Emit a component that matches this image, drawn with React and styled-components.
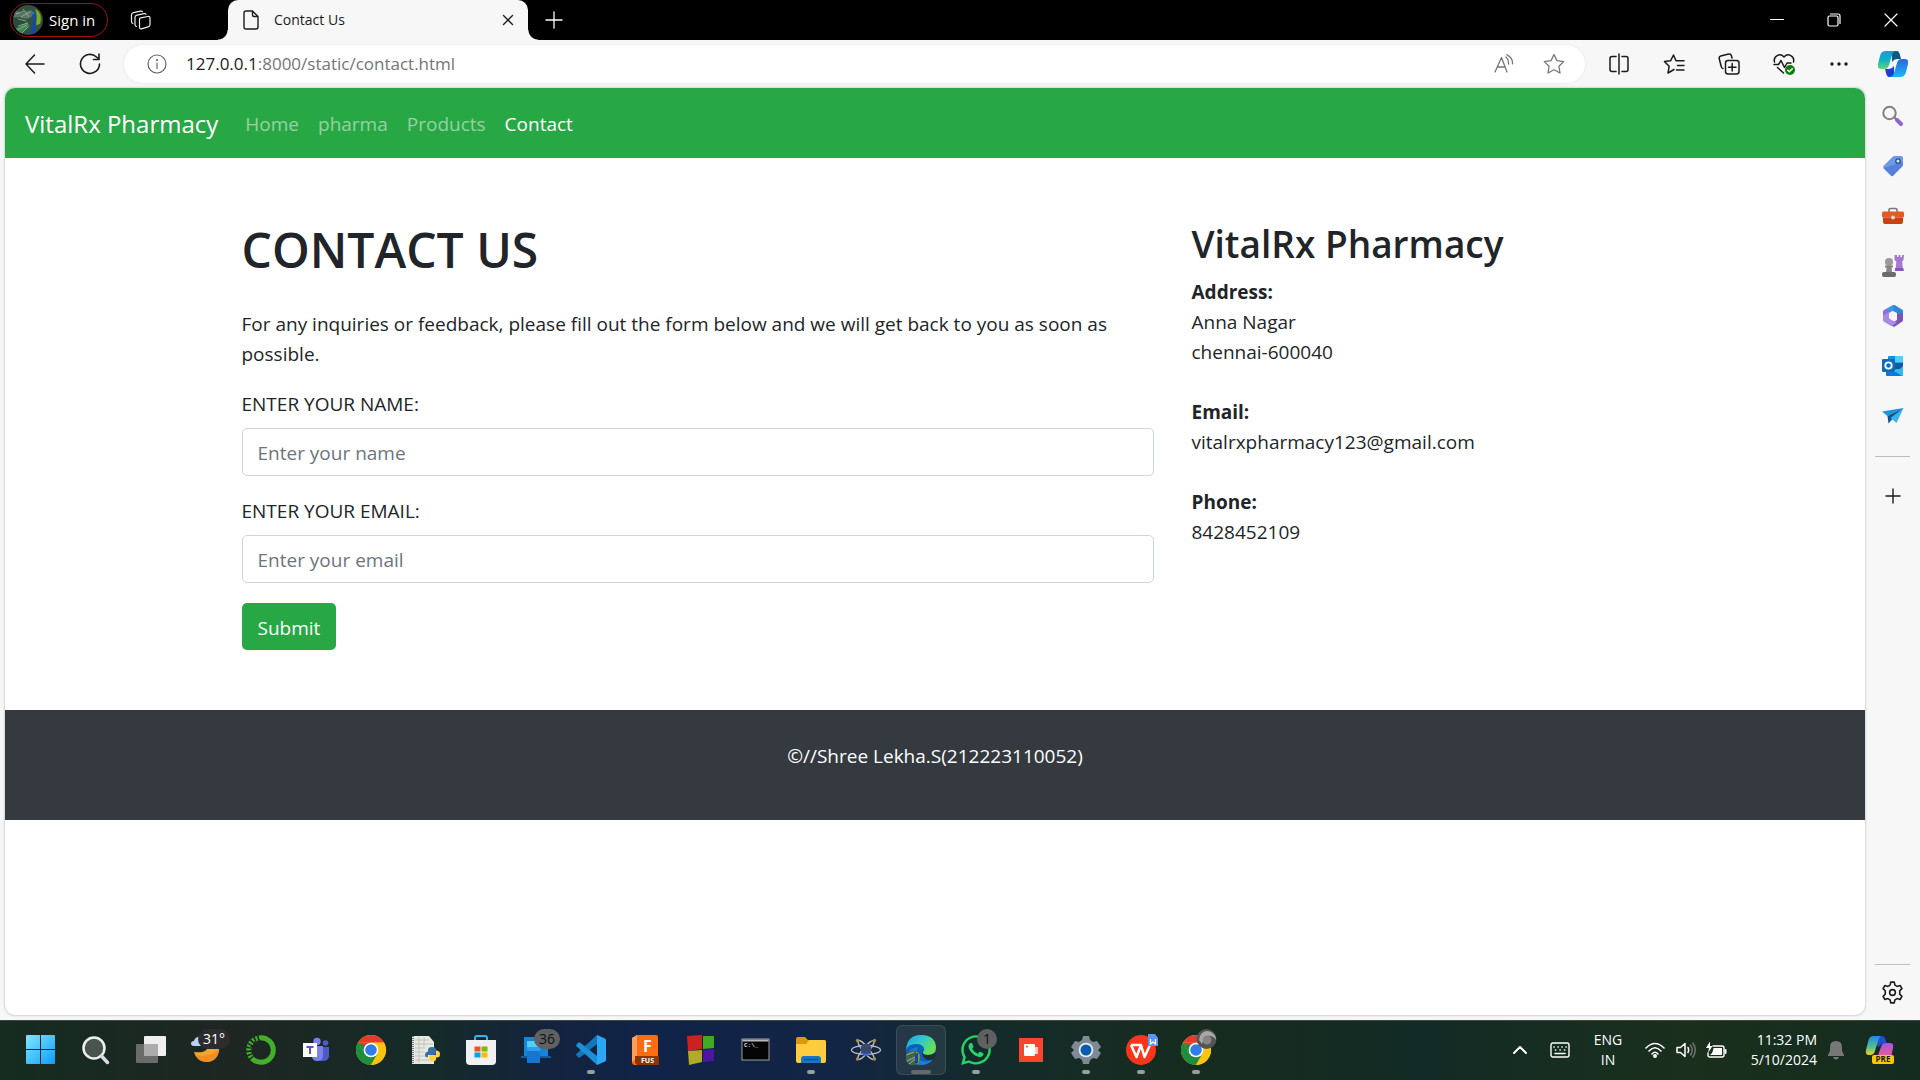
import React from "react";
import styled, { createGlobalStyle } from "styled-components";
import { FaWhatsapp } from "react-icons/fa";

const GlobalStyle = createGlobalStyle`
  *, *::before, *::after { box-sizing: border-box; }
  body {
    margin: 0;
    background: #f7f7f7;
    color: #212529;
    font-family: "Open Sans", "Noto Sans", sans-serif;
    font-size: 19px;
    line-height: 30px;
  }
  button, input { font: inherit; }
  svg { display: block; flex: none; }
`;

/* ---------- shared parts ---------- */

const Window = styled.div`
  display: flex;
  flex-direction: column;
  min-height: 100vh;
`;

const IconButton = styled.button`
  display: grid;
  place-items: center;
  flex: none;
  width: ${(p) => p.$w || 32}px;
  height: ${(p) => p.$h || 32}px;
  padding: 0;
  border: 0;
  background: none;
  color: ${(p) => p.$color || "#1b1b1b"};
`;

const Spacer = styled.div`
  flex: 1;
`;

function Line({ size = 20, w, h, sw = 1, box = "0 0 20 20", children, ...rest }) {
  return (
    <svg
      width={w || size}
      height={h || size}
      viewBox={box}
      fill="none"
      stroke="currentColor"
      strokeWidth={sw}
      strokeLinecap="round"
      strokeLinejoin="round"
      aria-hidden="true"
      {...rest}
    >
      {children}
    </svg>
  );
}

/* ---------- title bar ---------- */

const TitleBar = styled.header`
  display: flex;
  align-items: center;
  height: 40px;
  padding: 0 1px 0 10px;
  background: #000;
  color: #fff;
  font-size: 15px;
  line-height: 20px;
`;

const Profile = styled.button`
  display: flex;
  align-items: center;
  gap: 6px;
  width: 98px;
  height: 34px;
  padding: 0 0 0 2px;
  border: 1px solid #a30d12;
  border-radius: 17px;
  background: #000;
  color: #fff;
  font-size: 15px;
  white-space: nowrap;
`;

const Workspaces = styled(IconButton)`
  justify-items: end;
  padding-right: 6px;
`;

const Tab = styled.div`
  position: relative;
  display: flex;
  align-items: center;
  align-self: stretch;
  gap: 15px;
  width: 300px;
  margin-left: 70px;
  padding: 0 4px 0 15px;
  border-radius: 10px 10px 0 0;
  background: #f7f7f7;
  color: #1b1b1b;
  font-size: 14px;

  &::before,
  &::after {
    content: "";
    position: absolute;
    bottom: 0;
    width: 10px;
    height: 10px;
  }
  &::before {
    left: -10px;
    background: radial-gradient(circle at 0 0, #000 9px, #f7f7f7 10px);
  }
  &::after {
    right: -10px;
    background: radial-gradient(circle at 100% 0, #000 9px, #f7f7f7 10px);
  }
`;

const TabTitle = styled.span`
  flex: 1;
`;

function Avatar() {
  return (
    <svg width="30" height="30" viewBox="0 0 30 30" aria-hidden="true">
      <defs>
        <clipPath id="avatar">
          <circle cx="15" cy="15" r="15" />
        </clipPath>
      </defs>
      <g clipPath="url(#avatar)">
        <rect width="30" height="30" fill="#34503f" />
        <path d="M0 4l8 4 10-3 4 5-8 4-14-2z" fill="#587463" />
        <path d="M0 14l7-2 6 6-13 5z" fill="#2c4a3a" />
        <path d="M2 24l12-7 3 4-10 9H2z" fill="#3f8551" />
        <path d="M5 21l10-3M4 25l10-5M9 28l6-6M3 9l8-3M8 12l9-5M5 14l8 2M10 4l6 8" stroke="#93b59b" strokeWidth=".8" />
        <path d="M22 4c6 3 7 9 5 15l-4 1c1-6 1-12-1-16z" fill="#7fae1d" />
        <path d="M19 8c3-1 4 2 4 6 0 7 0 11-2 14h-4c2-6 3-9 3-14z" fill="#1746a8" />
        <circle cx="20" cy="8" r="1.600" fill="#2f6fd6" />
      </g>
    </svg>
  );
}

/* ---------- toolbar ---------- */

const Toolbar = styled.div`
  display: flex;
  align-items: center;
  height: 48px;
  padding: 0 12px 0 19px;
  background: #f7f7f7;
`;

const AddressBar = styled.form`
  display: flex;
  align-items: center;
  flex: 1;
  height: 38px;
  margin: 0 18px;
  padding: 0 15px 0 17px;
  border-radius: 19px;
  background: #fff;
  box-shadow: 0 0 3px rgba(0, 0, 0, 0.08);
  font-size: 17px;
`;

const Host = styled.label`
  margin-left: 13px;
  color: #1b1b1b;
`;

const UrlPath = styled.input`
  flex: 1;
  min-width: 0;
  padding: 0;
  border: 0;
  outline: 0;
  background: none;
  color: #757575;
`;

const ToolGroup = styled.div`
  display: flex;
  align-items: center;
  gap: ${(p) => p.$gap}px;
`;

/* ---------- page ---------- */

const Body = styled.div`
  display: flex;
  flex: 1;
  padding: 0 0 5px 5px;
`;

const Page = styled.div`
  flex: 1;
  border-radius: 10px;
  background: #fff;
  box-shadow: 0 0 2px 1px rgba(0, 0, 0, 0.14);
  overflow: hidden;
`;

const Navbar = styled.nav`
  display: flex;
  align-items: center;
  gap: 19px;
  height: 70px;
  padding: 2px 20px 0;
  background: #28a745;
`;

const Brand = styled.a`
  margin-right: 8px;
  color: #fff;
  font-size: 24px;
  text-decoration: none;
  white-space: nowrap;
`;

const NavLink = styled.a`
  color: ${(p) => (p.$active ? "#fff" : "rgba(255, 255, 255, 0.5)")};
  text-decoration: none;
`;

const Container = styled.main`
  display: grid;
  grid-template-columns: 2fr 1fr;
  max-width: 1425px;
  margin: 0 auto;
  padding: 62px 0 60px;
`;

const Column = styled.section`
  padding: 0 19px;
`;

const Title = styled.h1`
  margin: 0 0 29px;
  font-size: 48px;
  font-weight: 600;
  line-height: 60px;
`;

const Subtitle = styled.h2`
  margin: 0 0 9px;
  font-size: 37px;
  font-weight: 600;
  line-height: 48px;
`;

const Intro = styled.p`
  margin: 0 0 20px;
`;

const Field = styled.div`
  display: flex;
  flex-direction: column;
  gap: 9px;
  margin-bottom: 20px;
`;

const TextInput = styled.input`
  width: 100%;
  height: 48px;
  padding: 2px 15px 0;
  border: 1px solid #ced4da;
  border-radius: 5px;
  background: #fff;
  color: #495057;

  &::placeholder {
    color: #6c757d;
    opacity: 1;
  }
`;

const Submit = styled.button`
  height: 47px;
  padding: 2px 16px 0;
  border: 0;
  border-radius: 5px;
  background: #28a745;
  color: #fff;
`;

const Contact = styled.address`
  display: grid;
  gap: 30px;
  font-style: normal;
`;

const ContactItem = styled.div`
  display: flex;
  flex-direction: column;
`;

const Footer = styled.footer`
  height: 110px;
  padding-top: 31px;
  background: #343a40;
  color: #fff;
  text-align: center;
`;

/* ---------- side bar ---------- */

const Sidebar = styled.aside`
  display: flex;
  flex-direction: column;
  align-items: center;
  width: 55px;
  padding: 3px 0 5px;
`;

const SideRule = styled.hr`
  width: 35px;
  margin: ${(p) => p.$space}px 0;
  border: 0;
  border-top: 1px solid #bdbdbd;
`;

function SideIcon({ children, box = "0 0 22 22" }) {
  return (
    <svg width="22" height="22" viewBox={box} aria-hidden="true">
      {children}
    </svg>
  );
}

const SIDE_ITEMS = [
  {
    name: "Search",
    art: (
      <>
        <path d="M15 15l4 4" stroke="#9164cc" strokeWidth="4" strokeLinecap="round" />
        <path d="M12 12l2.500 2.500" stroke="#777" strokeWidth="2" />
        <circle cx="7.500" cy="8" r="6.200" fill="none" stroke="#808080" strokeWidth="2" />
      </>
    ),
  },
  {
    name: "Shopping",
    art: (
      <>
        <path d="M12.500 1H19q2 0 2 2v6.500q0 1-.7 1.700l-9 9.200q-1.300 1.200-2.600 0l-7-7q-1.200-1.300 0-2.600l9-9q.8-.8 1.800-.8z" fill="#6d97e8" />
        <path d="M1.500 13l8 8q1 .5 1.800-.4l9-9.200q.7-.7.7-1.900V7z" fill="#4a72cb" opacity=".6" />
        <circle cx="16" cy="6" r="2.200" fill="#dce7fb" stroke="#2b4b95" strokeWidth="1.300" />
      </>
    ),
  },
  {
    name: "Tools",
    art: (
      <>
        <path d="M7 8V5q0-1.500 1.500-1.500h5Q15 3.500 15 5v3" fill="none" stroke="#777" strokeWidth="1.600" />
        <rect x="0" y="6.500" width="22" height="6" rx="1.500" fill="#e35a22" />
        <path d="M1 12.500h20V17q0 2-2 2H3q-2 0-2-2z" fill="#c8410f" />
        <circle cx="11" cy="12.500" r="2" fill="#d9d9d9" />
      </>
    ),
  },
  {
    name: "Games",
    art: (
      <>
        <path d="M12.500 0h2.500v2h1.500V0h2v2H20V0h2l-.5 5-1.300 1.500.6 6.500 1 3h-9l1-3 .5-6.500L12.500 5z" fill="#a678d8" />
        <path d="M13 13h8.500v3H13z" fill="#8557bd" />
        <circle cx="7" cy="7" r="4" fill="#9a9a9a" />
        <path d="M3 10.500h8v2H9.500l.7 5.500H4l.6-5.500H3z" fill="#858585" />
        <rect x="0" y="17" width="14" height="5" rx="2" fill="#6b6b6b" />
      </>
    ),
  },
  {
    name: "Microsoft 365",
    art: (
      <>
        <path d="M11 0L2 5q-1 .6-1 2v6l6 2V8l5-3z" fill="#8a72de" />
        <path d="M11 .3q1-.5 2 0L20 4.500q1 .6 1 2V14l-6-3.500V8L9 5V1.500z" fill="#2f86dd" />
        <path d="M21 8v7q0 1-1 1.700L13 21.500q-1 .6-2 0L8 19l7-4V9z" fill="#7a55b7" />
        <path d="M1 10.500V15q0 1 1 1.700l7.500 4.500 5.500-4-4-1.500-4-2.500V7z" fill="#a98be6" />
        <path d="M11 .3L4 5l8 1z" fill="#2aa0e8" />
        <circle cx="11" cy="11" r="3.800" fill="#f7f7f7" />
      </>
    ),
  },
  {
    name: "Outlook",
    art: (
      <>
        <rect x="6" y="1" width="15" height="14" rx="1" fill="#1490df" />
        <path d="M13 1h8v6h-8z" fill="#50d0fa" />
        <path d="M13 7h8v6h-8z" fill="#28a8ea" />
        <path d="M4 17h17v3q0 1-1 1H5q-1 0-1-1z" fill="#0f78d4" />
        <path d="M21 10v10q0 1-1 1l-8-5z" fill="#35b8f1" />
        <path d="M12 14h6l3-3V8h-8z" fill="#0d5aa7" />
        <rect x="0" y="4" width="13" height="13" rx="1.300" fill="#0f6cbd" />
        <circle cx="6.500" cy="10.500" r="3.200" fill="none" stroke="#fff" strokeWidth="1.800" />
      </>
    ),
  },
  {
    name: "Drop",
    art: (
      <>
        <path d="M21.500 3L0 6.500 5.500 11z" fill="#1c93dd" />
        <path d="M21.500 3L5.500 11l1 7.500 3-3.500z" fill="#0c5394" />
        <path d="M21.500 3L8.500 13l6 5z" fill="#39b4ee" />
      </>
    ),
  },
];

function CopilotMark() {
  return (
    <svg width="30" height="28" viewBox="0 0 30 28" aria-hidden="true">
      <defs>
        <linearGradient id="cp1" x1="0" y1="0" x2="0" y2="1">
          <stop offset="0" stopColor="#129bdb" />
          <stop offset=".5" stopColor="#13b0c4" />
          <stop offset="1" stopColor="#5fd67b" />
        </linearGradient>
        <linearGradient id="cp2" x1="0" y1="0" x2="0" y2="1">
          <stop offset="0" stopColor="#2b66d9" />
          <stop offset="1" stopColor="#19b9ff" />
        </linearGradient>
      </defs>
      <path d="M14 1h5q2 0 3 4l1 4h-4q-3 0-5 3z" fill="#0b5a82" />
      <path d="M16 27h-5q-2 0-3-4l-1-4h4q3 0 5-3z" fill="#1a3fd0" />
      <path d="M8 1h11q-4 0-5 4l-3 10q-1 4-5 4H3q-4 0-3-5l2-8q1-5 6-5z" fill="url(#cp1)" />
      <path d="M22 27H11q4 0 5-4l3-10q1-4 5-4h3q4 0 3 5l-2 8q-1 5-6 5z" fill="url(#cp2)" />
    </svg>
  );
}

/* ---------- task bar ---------- */

const Taskbar = styled.footer`
  display: flex;
  align-items: center;
  height: 60px;
  padding: 0 15px 1px 16px;
  border-top: 1px solid #3a4a40;
  background: linear-gradient(
    90deg,
    #152c20 0%,
    #1e2622 12%,
    #152b28 22%,
    #13233f 29%,
    #102348 34%,
    #122544 44%,
    #142b2b 51%,
    #172c1f 62%,
    #132b26 74%,
    #1a2f1c 88%,
    #142c20 100%
  );
  color: #fff;
`;

const Apps = styled.div`
  display: flex;
  gap: 5px;
`;

const AppButton = styled.button`
  position: relative;
  display: grid;
  place-items: center;
  width: 50px;
  height: 50px;
  padding: 0;
  border: 1px solid ${(p) => (p.$active ? "rgba(255,255,255,.1)" : "transparent")};
  border-radius: 6px;
  background: ${(p) => (p.$active ? "rgba(255,255,255,.08)" : "none")};
  color: #fff;

  &::after {
    content: "";
    display: ${(p) => (p.$open ? "block" : "none")};
    position: absolute;
    bottom: 0;
    left: calc(50% - ${(p) => (p.$active ? 10 : 4)}px);
    width: ${(p) => (p.$active ? 20 : 8)}px;
    height: 4px;
    border-radius: 2px;
    background: ${(p) => (p.$active ? "#67686a" : "#969f9c")};
  }
`;

const Badge = styled.span`
  position: absolute;
  top: 3px;
  right: ${(p) => (p.$wide ? 0 : 3)}px;
  min-width: 20px;
  height: 20px;
  padding: 0 ${(p) => (p.$wide ? 5 : 0)}px;
  border-radius: 10px;
  background: ${(p) => (p.$dark ? "#2c2c2e" : "#5f6062")};
  color: ${(p) => (p.$dark ? "#fff" : "#111")};
  font-size: 14px;
  line-height: 20px;
  text-align: center;
`;

const Tray = styled.div`
  display: flex;
  align-items: center;
`;

const TrayText = styled.button`
  width: ${(p) => p.$w}px;
  padding: 0;
  border: 0;
  background: none;
  color: #fff;
  font-size: 14px;
  line-height: 20px;
  text-align: ${(p) => p.$align || "center"};
  white-space: nowrap;
`;

const Chrome = () => (
  <>
    <circle cx="15" cy="15" r="15" fill="#fbbc05" />
    <path d="M2 7.500A15 15 0 0 1 28 7.500H15z" fill="#e33b2e" />
    <path d="M2 7.500A15 15 0 0 0 15 30l6.500-11.250H15L8.500 18.750z" fill="#1e8e3e" />
    <path d="M2 7.500h26L26 9H15L8.500 15z" fill="#e33b2e" />
    <path d="M2 7.500L8.500 18.750 12 12z" fill="#1e8e3e" />
    <path d="M15 30a15 15 0 0 0 13-22.500H15l6.500 11.250z" fill="#fdc311" />
    <circle cx="15" cy="15" r="7.300" fill="#fff" />
    <circle cx="15" cy="15" r="5.800" fill="#2f7de9" />
  </>
);

const APPS = [
  {
    name: "Start",
    art: (
      <>
        <defs>
          <linearGradient id="win" x1="0" y1="0" x2="30" y2="30" gradientUnits="userSpaceOnUse">
            <stop offset="0" stopColor="#7deaff" />
            <stop offset="1" stopColor="#0c98fb" />
          </linearGradient>
        </defs>
        <path d="M1 0h13v14H0V1q0-1 1-1zM15 0h13q1 0 1 1v13H15zM0 15h14v14H1q-1 0-1-1zM15 15h14v13q0 1-1 1H15z" fill="url(#win)" />
      </>
    ),
  },
  {
    name: "Search",
    art: (
      <>
        <circle cx="13" cy="13" r="10.500" fill="#4a544f" stroke="#eef0f0" strokeWidth="2.500" />
        <path d="M20.500 21l6 6.500" stroke="#d9dbdd" strokeWidth="3.500" strokeLinecap="round" />
      </>
    ),
  },
  {
    name: "Task view",
    art: (
      <>
        <rect x="8" y="1" width="22" height="20" rx="1" fill="#efefef" />
        <rect x="0" y="9" width="22" height="19" rx="1" fill="#6b6b6b" />
        <path d="M8 9h14v12H8z" fill="#acacac" />
      </>
    ),
  },
  {
    name: "Weather",
    badge: <Badge $dark $wide>31°</Badge>,
    art: (
      <>
        <path d="M3 17c9 1 13-1 14-5h11c1 9-5 15-12 15S5 23 3 17z" fill="#f5a52d" />
        <path d="M4 20c8 2 19 0 24-6-1 8-6 13-12 13S6 24 4 20z" fill="#ee8322" opacity=".7" />
        <path d="M3 11c-4 0-4-5 0-5 1-5 7-5 9-3v8z" fill="#b8d1f5" />
      </>
    ),
  },
  {
    name: "Anaconda",
    art: (
      <>
        <circle cx="15" cy="15" r="12.300" fill="none" stroke="#43b02a" strokeWidth="5" />
        <path d="M13 3A12.300 12.300 0 0 0 6 23.500" fill="none" stroke="#1c2622" strokeWidth="5.400" strokeDasharray="1.500 2" />
        <path d="M14 5A10 10 0 0 0 6 20" fill="none" stroke="#1c2622" strokeWidth="1.500" strokeDasharray="2 3" />
      </>
    ),
  },
  {
    name: "Teams",
    art: (
      <>
        <circle cx="16" cy="6.500" r="3.700" fill="#7b83eb" />
        <circle cx="24.500" cy="8" r="2.800" fill="#5059c9" />
        <path d="M19 12h9v9q0 4-5 5h-4z" fill="#5059c9" />
        <path d="M11 11h11v10q0 5-6 5-4 0-5-4z" fill="#7b83eb" />
        <rect x="2" y="8" width="14" height="14" fill="#fff" />
        <path d="M5.500 12h7M9 12v7" stroke="#5059c9" strokeWidth="2" />
      </>
    ),
  },
  { name: "Chrome", art: <Chrome /> },
  {
    name: "Python",
    art: (
      <>
        <path d="M1 1h17l5 6v22H1z" fill="#e8e8e5" />
        <path d="M2 1v28" stroke="#777" strokeWidth="2" strokeDasharray="1 1" />
        <path d="M4 5h14M4 9h18M4 13h10M4 17h10M4 21h10M4 25h14M8 2v26M13 2v10" stroke="#c2c2be" />
        <path d="M17 20v-5q0-3 4-3t4 3v3q0 2-2 2h-6z" fill="#35709f" />
        <path d="M14 20q0-3 3-3.500V22q-3 1-3-2z" fill="#35709f" />
        <path d="M25 15.500q4 0 4 3.500t-3 3.500h-1v1.500q0 2.500-3.500 2.500T18 24v-2q0-2 2-2h5z" fill="#ffd43b" />
      </>
    ),
  },
  {
    name: "Store",
    art: (
      <>
        <path d="M9 6V3q0-2 2-2h8q2 0 2 2v3" fill="none" stroke="#32b5ef" strokeWidth="2" />
        <path d="M0 5h30v21q0 4-4 4H4q-4 0-4-4z" fill="#f1f1f1" />
        <path d="M8.500 11.500h6v5h-6z" fill="#f25022" />
        <path d="M15.500 11.500h6v5h-6z" fill="#7fba00" />
        <path d="M8.500 17.500h6v5h-6z" fill="#00a4ef" />
        <path d="M15.500 17.500h6v5h-6z" fill="#ffb900" />
      </>
    ),
  },
  {
    name: "Phone link",
    badge: <Badge $wide>36</Badge>,
    art: (
      <>
        <path d="M3 2h24v19H3z" fill="#1684d8" />
        <path d="M0 21h30v2H0z" fill="#0d5ca8" />
        <path d="M6 6h13v17H6z" fill="#2e9fec" />
        <path d="M6 6h13v6H6z" fill="#55ccfa" />
        <path d="M6 16h13v12H6z" fill="#1777cf" />
      </>
    ),
  },
  {
    name: "Visual Studio Code",
    open: true,
    art: (
      <>
        <path d="M21 0l8 3.500q1 .5 1 1.500v20q0 1-1 1.500L21 30z" fill="#2aa8f5" />
        <path d="M21 0v9L4 22.500q-.8.500-1.500 0l-2-2q-.8-1 0-1.700z" fill="#1176bd" />
        <path d="M21 30v-9L4 7.500q-.8-.5-1.500 0l-2 2q-.8 1 0 1.700z" fill="#1c8fd9" />
      </>
    ),
  },
  {
    name: "Fusion",
    art: (
      <>
        <path d="M1 3l5-3h19q2 0 2 2v24l-3 4H4q-3 0-3-3z" fill="#fb6d10" />
        <path d="M1 3l5-3v22l-5 5z" fill="#ffa15c" />
        <path d="M4 21h24v9H6l-2-2z" fill="#8c3500" />
        <text x="12" y="17" fontFamily="Open Sans, sans-serif" fontSize="16" fontWeight="700" fill="#fff">F</text>
        <text x="10" y="28" fontFamily="Open Sans, sans-serif" fontSize="7" fontWeight="700" fill="#fff">FUS</text>
      </>
    ),
  },
  {
    name: "Blocks",
    art: (
      <>
        <path d="M1 1l15-1v14l-14 2z" fill="#c8231f" />
        <path d="M17 1h11v12l-11 1z" fill="#3faa22" />
        <path d="M2 16l14-1v12l-13 3z" fill="#b0ac28" />
        <path d="M17 15l11-1v12l-11 1z" fill="#4c16a5" />
      </>
    ),
  },
  {
    name: "Command prompt",
    art: (
      <>
        <rect x="1" y="4" width="27" height="21" fill="#050505" stroke="#9b9da0" />
        <path d="M1.500 5.500h26" stroke="#b7babd" strokeWidth="2" />
        <text x="3" y="12" fontFamily="Liberation Mono, monospace" fontSize="6" fontWeight="700" fill="#ddd">C:\_</text>
      </>
    ),
  },
  {
    name: "File explorer",
    open: true,
    art: (
      <>
        <path d="M0 4q0-2 2-2h7l3 3h16q2 0 2 2v4H0z" fill="#d99a0c" />
        <path d="M0 9h10l3-4h15q2 0 2 2v19q0 2-2 2H2q-2 0-2-2z" fill="#ffcc3f" />
        <path d="M5 28v-4q0-3 3-3h14q3 0 3 3v4z" fill="#1576c9" />
        <path d="M8 24.500h14" stroke="#0b4f95" strokeWidth="1.300" />
      </>
    ),
  },
  {
    name: "Atom",
    art: (
      <>
        <g fill="none" stroke="#b7bcc5" strokeWidth="1.300">
          <ellipse cx="15" cy="15" rx="14.500" ry="4.500" />
          <ellipse cx="15" cy="15" rx="3" ry="12" transform="rotate(40 15 15)" />
          <ellipse cx="15" cy="15" rx="3" ry="12" transform="rotate(-40 15 15)" />
        </g>
        <circle cx="15" cy="14" r="5.500" fill="#39466d" />
        <path d="M10 17q5 3 10 0-2 4-5 4t-5-4z" fill="#3567cc" />
        <g fill="#b38a3c">
          <circle cx="6.500" cy="5.500" r="1.700" />
          <circle cx="23.500" cy="5.500" r="1.700" />
          <circle cx="6.500" cy="24" r="1.700" />
          <circle cx="23.500" cy="24" r="1.700" />
        </g>
      </>
    ),
  },
  {
    name: "Edge",
    open: true,
    active: true,
    art: (
      <>
        <defs>
          <linearGradient id="edge1" x1="0" y1="0" x2="1" y2=".5">
            <stop offset="0" stopColor="#1fa1e0" />
            <stop offset=".5" stopColor="#2cc8d0" />
            <stop offset="1" stopColor="#6be04f" />
          </linearGradient>
          <clipPath id="mini">
            <circle cx="7" cy="23" r="7.500" />
          </clipPath>
        </defs>
        <circle cx="15" cy="15" r="15" fill="#0e5fb8" />
        <path d="M12 12q-4 7 2 13 6 4 13-1-4 6-12 6-9 0-13-8-1-8 10-10z" fill="#1b7fd6" />
        <path d="M0 15Q1 0 15 0q14 0 15 12 0 8-8 8-6 0-5-3 2-2 1-4-2-4-8-4Q2 9 0 15z" fill="url(#edge1)" />
        <path d="M17 17q-1 3 5 3 5 0 7.500-3l.5 3-2 4q-2 1-4 1-6 0-8-6 0-1 1-2z" fill="#1b2e33" />
        <g clipPath="url(#mini)">
          <rect y="15" width="15" height="15" fill="#41634a" />
          <path d="M0 20l8-3M1 26l8-4M3 29l6-5" stroke="#98b79c" />
          <path d="M10 16l4 3-1 10h-2z" fill="#82a51f" />
          <path d="M9 19l3-1v10H9z" fill="#17479d" />
        </g>
      </>
    ),
  },
  { name: "WhatsApp", open: true, badge: <Badge>1</Badge>, icon: <FaWhatsapp size={34} color="#25d366" /> },
  {
    name: "Recorder",
    art: (
      <>
        <rect x="3" y="3" width="24" height="24" fill="#f8452f" />
        <rect x="8" y="9" width="11" height="12" rx="1" fill="#fff" />
        <path d="M19 12h3v7h-3z" fill="#ffc6bd" />
        <circle cx="11" cy="11.500" r="1" fill="#f8452f" />
      </>
    ),
  },
  {
    name: "Settings",
    open: true,
    art: (
      <>
        <path d="M12 1h6l1 4 3 2 4-1 4 6-3 3 3 3-4 6-4-1-3 2-1 4h-6l-1-4-3-2-4 1-4-6 3-3-3-3 4-6 4 1 3-2z" fill="#7f8a96" />
        <circle cx="15" cy="15" r="7.300" fill="#e7edf2" />
        <circle cx="15" cy="15" r="5.500" fill="#0b5cab" />
      </>
    ),
  },
  {
    name: "WPS Office",
    open: true,
    art: (
      <>
        <circle cx="15" cy="15" r="15" fill="#fb3618" />
        <path d="M5 10h10M5 10l5.500 12 4.500-12 3.500 12L24 10" fill="none" stroke="#fff" strokeWidth="2.500" strokeLinejoin="round" />
        <path d="M22-1h7l3 4v8H22z" fill="#5a96f5" />
        <path d="M24.500 4v5l2.500-2 2.500 2V4" fill="none" stroke="#fff" strokeWidth="1.200" />
      </>
    ),
  },
  {
    name: "Chrome profile",
    open: true,
    art: (
      <>
        <Chrome />
        <circle cx="25.500" cy="4" r="10" fill="#555" />
        <path d="M18 5q1-9 9-9 8 2 8 9-4-5-8-4t-6 8z" fill="#a9a9a9" />
        <circle cx="26" cy="5" r="4.500" fill="#858585" />
      </>
    ),
  },
];

const COG = "M8.500 1h3l.6 2.600 1.900 1.100 2.600-.8 1.600 2.700L16.300 8.500v3l1.900 1.900-1.600 2.700-2.600-.8-1.900 1.100-.6 2.600h-3l-.6-2.600L6 15.300l-2.600.8-1.600-2.700 1.900-1.900v-3L1.800 6.600l1.600-2.700 2.600.8 1.900-1.100z";

export default function App() {
  return (
    <Window>
      <GlobalStyle />
      <TitleBar>
        <Profile type="button">
          <Avatar />
          Sign in
        </Profile>
        <Workspaces aria-label="Workspaces" $w={50} $color="#eee">
          <Line size={22} sw={1.2} box="0 0 22 22">
            <path d="M10.500 8.800l7.500-1.300q2-.3 2 1.700v6.300q0 2-2 2.400L11.500 19.800q-2 .4-2-1.600V10.500q0-1.500 1-1.700z" />
            <path d="M6.500 17.500q-1.500-.2-1.500-2V8.500q0-2 2-2.400L14 4.700q1.500-.3 2 .5M3 14.500q-1.500-.3-1.500-2V6q0-2 2-2.400L10.500 2.200q1.500-.3 2 .5" />
          </Line>
        </Workspaces>
        <Tab>
          <Line w={16} h={20} sw={1.4} box="0 0 16 20">
            <path d="M3 1h6.500L15 6.500V17q0 2-2 2H3q-2 0-2-2V3q0-2 2-2zM9.500 1v4q0 1.500 1.500 1.500h4" />
          </Line>
          <TabTitle>Contact Us</TabTitle>
          <IconButton aria-label="Close tab">
            <Line size={12} sw={1.4} box="0 0 12 12">
              <path d="M1.500 1.500l9 9m0-9l-9 9" />
            </Line>
          </IconButton>
        </Tab>
        <IconButton aria-label="New tab" $w={52} $color="#fff">
          <Line size={18} sw={1.3} box="0 0 18 18">
            <path d="M9 1v16M1 9h16" />
          </Line>
        </IconButton>
        <Spacer />
        <IconButton aria-label="Minimize" $w={57} $h={40} $color="#fff">
          <Line size={14} box="0 0 14 14">
            <path d="M.5 6.500h13" />
          </Line>
        </IconButton>
        <IconButton aria-label="Restore" $w={57} $h={40} $color="#fff">
          <Line size={14} sw={1.2} box="0 0 14 14">
            <rect x="1" y="3" width="10" height="10" rx="1.500" />
            <path d="M3.500 1H11q2 0 2 2v7.500" />
          </Line>
        </IconButton>
        <IconButton aria-label="Close" $w={57} $h={40} $color="#fff">
          <Line size={14} sw={1.2} box="0 0 14 14">
            <path d="M1 1l12 12M13 1L1 13" />
          </Line>
        </IconButton>
      </TitleBar>

      <Toolbar>
        <ToolGroup $gap={23}>
          <IconButton aria-label="Back">
            <Line size={22} sw={1.5} box="0 0 22 22">
              <path d="M20 11H2M10.500 2L2 11l8.500 9" />
            </Line>
          </IconButton>
          <IconButton aria-label="Reload">
            <Line size={22} sw={1.6} box="0 0 22 22">
              <path d="M20.500 11a9.500 9.500 0 1 1-3-7l2.500 2M20 1v5.500h-5.500" />
            </Line>
          </IconButton>
        </ToolGroup>
        <AddressBar onSubmit={(e) => e.preventDefault()}>
          <IconButton type="button" aria-label="Site information" $color="#666">
            <Line size={20} sw={1.2}>
              <circle cx="10" cy="10" r="9" />
              <path d="M10 9v5.500" />
              <circle cx="10" cy="6" r=".5" fill="currentColor" />
            </Line>
          </IconButton>
          <Host htmlFor="url">127.0.0.1</Host>
          <UrlPath id="url" defaultValue=":8000/static/contact.html" />
          <ToolGroup $gap={18}>
            <IconButton type="button" aria-label="Read aloud" $color="#767676">
              <Line size={20} sw={1.3}>
                <path d="M1 18L7.500 3.500 13 18M3.500 13h7.500M12 3q3 2.500 2.500 7M13 .8q6 3 5.500 9" />
              </Line>
            </IconButton>
            <IconButton type="button" aria-label="Add to favorites" $color="#767676">
              <Line size={22} sw={1.3} box="0 0 22 22">
                <path d="M11 1.500l3 6.100 6.700 1-4.800 4.700 1.100 6.700-6-3.200L5 20l1.100-6.700L1.300 8.600l6.700-1z" />
              </Line>
            </IconButton>
          </ToolGroup>
        </AddressBar>
        <ToolGroup $gap={23}>
          <IconButton aria-label="Split screen">
            <Line size={22} sw={1.5} box="0 0 22 22">
              <path d="M8 3.500H4q-2 0-2 2v11q0 2 2 2h4M14 3.500h4q2 0 2 2v11q0 2-2 2h-4M11 1v20" />
            </Line>
          </IconButton>
          <IconButton aria-label="Favorites">
            <Line size={22} sw={1.5} box="0 0 22 22">
              <path d="M11 16.500L5 20l1.200-6.800L1.500 8.600l6-.8L10.500 2l2.500 5.800h8M14.500 12.500H21M13.500 17H21" />
            </Line>
          </IconButton>
          <IconButton aria-label="Collections">
            <Line size={22} sw={1.5} box="0 0 22 22">
              <path d="M5 15.500q-1.500-.2-1.800-2L1.200 5.500q-.3-2 1.500-2.500l8-2q2-.4 2.600 1.500l.7 2.500" />
              <rect x="7.500" y="7.500" width="13.500" height="13.500" rx="2.500" />
              <path d="M14.200 10.500v7.500M10.500 14.200H18" />
            </Line>
          </IconButton>
          <IconButton aria-label="Browser essentials">
            <Line size={22} sw={1.5} box="0 0 22 22">
              <path d="M1.500 9C0 3 7-.5 11 4c4-4.500 11-1 9.500 5M1 11.500h4.500l2.500-4 3.500 7 2.500-4.500H18M4.500 14.500L10.500 20" />
              <circle cx="17" cy="17" r="5" fill="#107c10" stroke="none" />
              <path d="M14.800 17.200l1.500 1.500 3-3" stroke="#fff" />
            </Line>
          </IconButton>
          <IconButton aria-label="More">
            <Line size={20}>
              <g fill="currentColor" stroke="none">
                <circle cx="3" cy="10" r="1.700" />
                <circle cx="10" cy="10" r="1.700" />
                <circle cx="17" cy="10" r="1.700" />
              </g>
            </Line>
          </IconButton>
          <IconButton aria-label="Copilot" $w={30}>
            <CopilotMark />
          </IconButton>
        </ToolGroup>
      </Toolbar>

      <Body>
        <Page>
          <Navbar>
            <Brand href="#">VitalRx Pharmacy</Brand>
            <NavLink href="#">Home</NavLink>
            <NavLink href="#">pharma</NavLink>
            <NavLink href="#">Products</NavLink>
            <NavLink href="#" $active>Contact</NavLink>
          </Navbar>
          <Container>
            <Column>
              <Title>CONTACT US</Title>
              <Intro>
                For any inquiries or feedback, please fill out the form below and we will get back to you as soon as
                possible.
              </Intro>
              <form onSubmit={(e) => e.preventDefault()}>
                <Field>
                  <label htmlFor="name">ENTER YOUR NAME:</label>
                  <TextInput id="name" placeholder="Enter your name" />
                </Field>
                <Field>
                  <label htmlFor="email">ENTER YOUR EMAIL:</label>
                  <TextInput id="email" type="email" placeholder="Enter your email" />
                </Field>
                <Submit type="submit">Submit</Submit>
              </form>
            </Column>
            <Column>
              <Subtitle>VitalRx Pharmacy</Subtitle>
              <Contact>
                <ContactItem>
                  <strong>Address:</strong>
                  <span>Anna Nagar</span>
                  <span>chennai-600040</span>
                </ContactItem>
                <ContactItem>
                  <strong>Email:</strong>
                  <span>vitalrxpharmacy123@gmail.com</span>
                </ContactItem>
                <ContactItem>
                  <strong>Phone:</strong>
                  <span>8428452109</span>
                </ContactItem>
              </Contact>
            </Column>
          </Container>
          <Footer>©//Shree Lekha.S(212223110052)</Footer>
        </Page>
        <Sidebar>
          {SIDE_ITEMS.map((item) => (
            <IconButton key={item.name} aria-label={item.name} $w={40} $h={50}>
              <SideIcon>{item.art}</SideIcon>
            </IconButton>
          ))}
          <SideRule $space={15} />
          <IconButton aria-label="Customize" $w={40} $h={48}>
            <Line size={16} sw={1.4} box="0 0 16 16">
              <path d="M8 1v14M1 8h14" />
            </Line>
          </IconButton>
          <Spacer />
          <SideRule $space={9} />
          <IconButton aria-label="Settings" $w={40} $h={36}>
            <Line size={23} sw={1.4}>
              <path d={COG} />
              <circle cx="10" cy="10" r="2.500" />
            </Line>
          </IconButton>
        </Sidebar>
      </Body>

      <Taskbar>
        <Apps>
          {APPS.map((app) => (
            <AppButton key={app.name} aria-label={app.name} $open={app.open} $active={app.active}>
              {app.icon || (
                <svg width="30" height="30" viewBox="0 0 30 30" overflow="visible" aria-hidden="true">
                  {app.art}
                </svg>
              )}
              {app.badge}
            </AppButton>
          ))}
        </Apps>
        <Spacer />
        <Tray>
          <IconButton aria-label="Show hidden icons" $w={40} $color="#fff">
            <Line w={14} h={8} sw={2} box="0 0 14 8">
              <path d="M1 7l6-6 6 6" />
            </Line>
          </IconButton>
          <IconButton aria-label="Touch keyboard" $w={40} $color="#fff">
            <Line w={20} h={16} sw={1.4} box="0 0 20 16">
              <rect x="1" y="1" width="18" height="14" rx="2" />
              <path d="M4 5h.2M8 5h.2M12 5h.2M16 5h.2M5.500 8h.2M10 8h.2M14.500 8h.2M5 11.500h10" strokeWidth="1.600" />
            </Line>
          </IconButton>
          <TrayText $w={56}>
            ENG
            <br />
            IN
          </TrayText>
          <IconButton aria-label="Network" $w={38} $color="#fff">
            <Line w={20} h={16} sw={1.6} box="0 0 20 16">
              <path d="M1 6q9-9 18 0M4 9q6-6.500 12 0M7 12q3-3.500 6 0" />
              <circle cx="10" cy="14" r="1.200" fill="currentColor" />
            </Line>
          </IconButton>
          <IconButton aria-label="Volume" $w={24} $color="#fff">
            <Line w={20} h={18} sw={1.5} box="0 0 20 18">
              <path d="M1 6.500h3.500L9 2.500v13l-4.500-4H1zM12 6.500q1.500 2.500 0 5" />
              <path d="M14.500 4q3.500 5 0 10M17 2q4.500 7 0 14" opacity=".35" />
            </Line>
          </IconButton>
          <IconButton aria-label="Battery" $w={36} $color="#fff">
            <Line w={21} h={17} sw={1.4} box="0 0 21 17">
              <path d="M7 4h9q2 0 2 2v7q0 2-2 2H4q-2 0-2-2v-2" />
              <path d="M7.500 6H16v7H4q3-2 3.500-7z" fill="currentColor" stroke="none" />
              <path d="M19.500 8v3" strokeWidth="2" />
              <path d="M4-.5L0 6h3l-1 5 4.500-7H4z" fill="currentColor" stroke="none" />
            </Line>
          </IconButton>
          <TrayText $w={83} $align="right">
            11:32 PM
            <br />
            5/10/2024
          </TrayText>
          <IconButton aria-label="Notifications" $w={38} $color="#777">
            <svg width="18" height="20" viewBox="0 0 18 20" fill="currentColor" aria-hidden="true">
              <path d="M9 1q6 0 6 6v4l2 4v1H1v-1l2-4V7q0-6 6-6zM6 17h6q-1 2.500-3 2.500T6 17z" />
            </svg>
          </IconButton>
          <IconButton aria-label="Copilot preview" $w={50} $h={40}>
            <svg width="30" height="30" viewBox="0 0 30 30" aria-hidden="true">
              <defs>
                <linearGradient id="pre1" x1="0" y1="0" x2="0" y2="1">
                  <stop offset="0" stopColor="#2287e8" />
                  <stop offset=".6" stopColor="#55c08a" />
                  <stop offset="1" stopColor="#f3d31e" />
                </linearGradient>
                <linearGradient id="pre2" x1="0" y1="0" x2="0" y2="1">
                  <stop offset="0" stopColor="#a452e8" />
                  <stop offset="1" stopColor="#f4607f" />
                </linearGradient>
              </defs>
              <path d="M8 1h8q4 0 5 5l1 3h-5l-4 3z" fill="#1d4fd0" />
              <path d="M8 1h8q-2 1-3 5l-3 10q-1 4-5 4H4q-4 0-3-5l2-8q1-6 5-6z" fill="url(#pre1)" />
              <path d="M12 23l4-11q1-4 5-4h4q4 0 3 5l-2 10z" fill="url(#pre2)" />
              <rect x="7" y="20" width="22" height="9" rx="2" fill="#fec601" />
              <text x="18" y="27" textAnchor="middle" fontFamily="Open Sans, sans-serif" fontSize="8" fontWeight="700" fill="#1b1b1b">PRE</text>
            </svg>
          </IconButton>
        </Tray>
      </Taskbar>
    </Window>
  );
}
